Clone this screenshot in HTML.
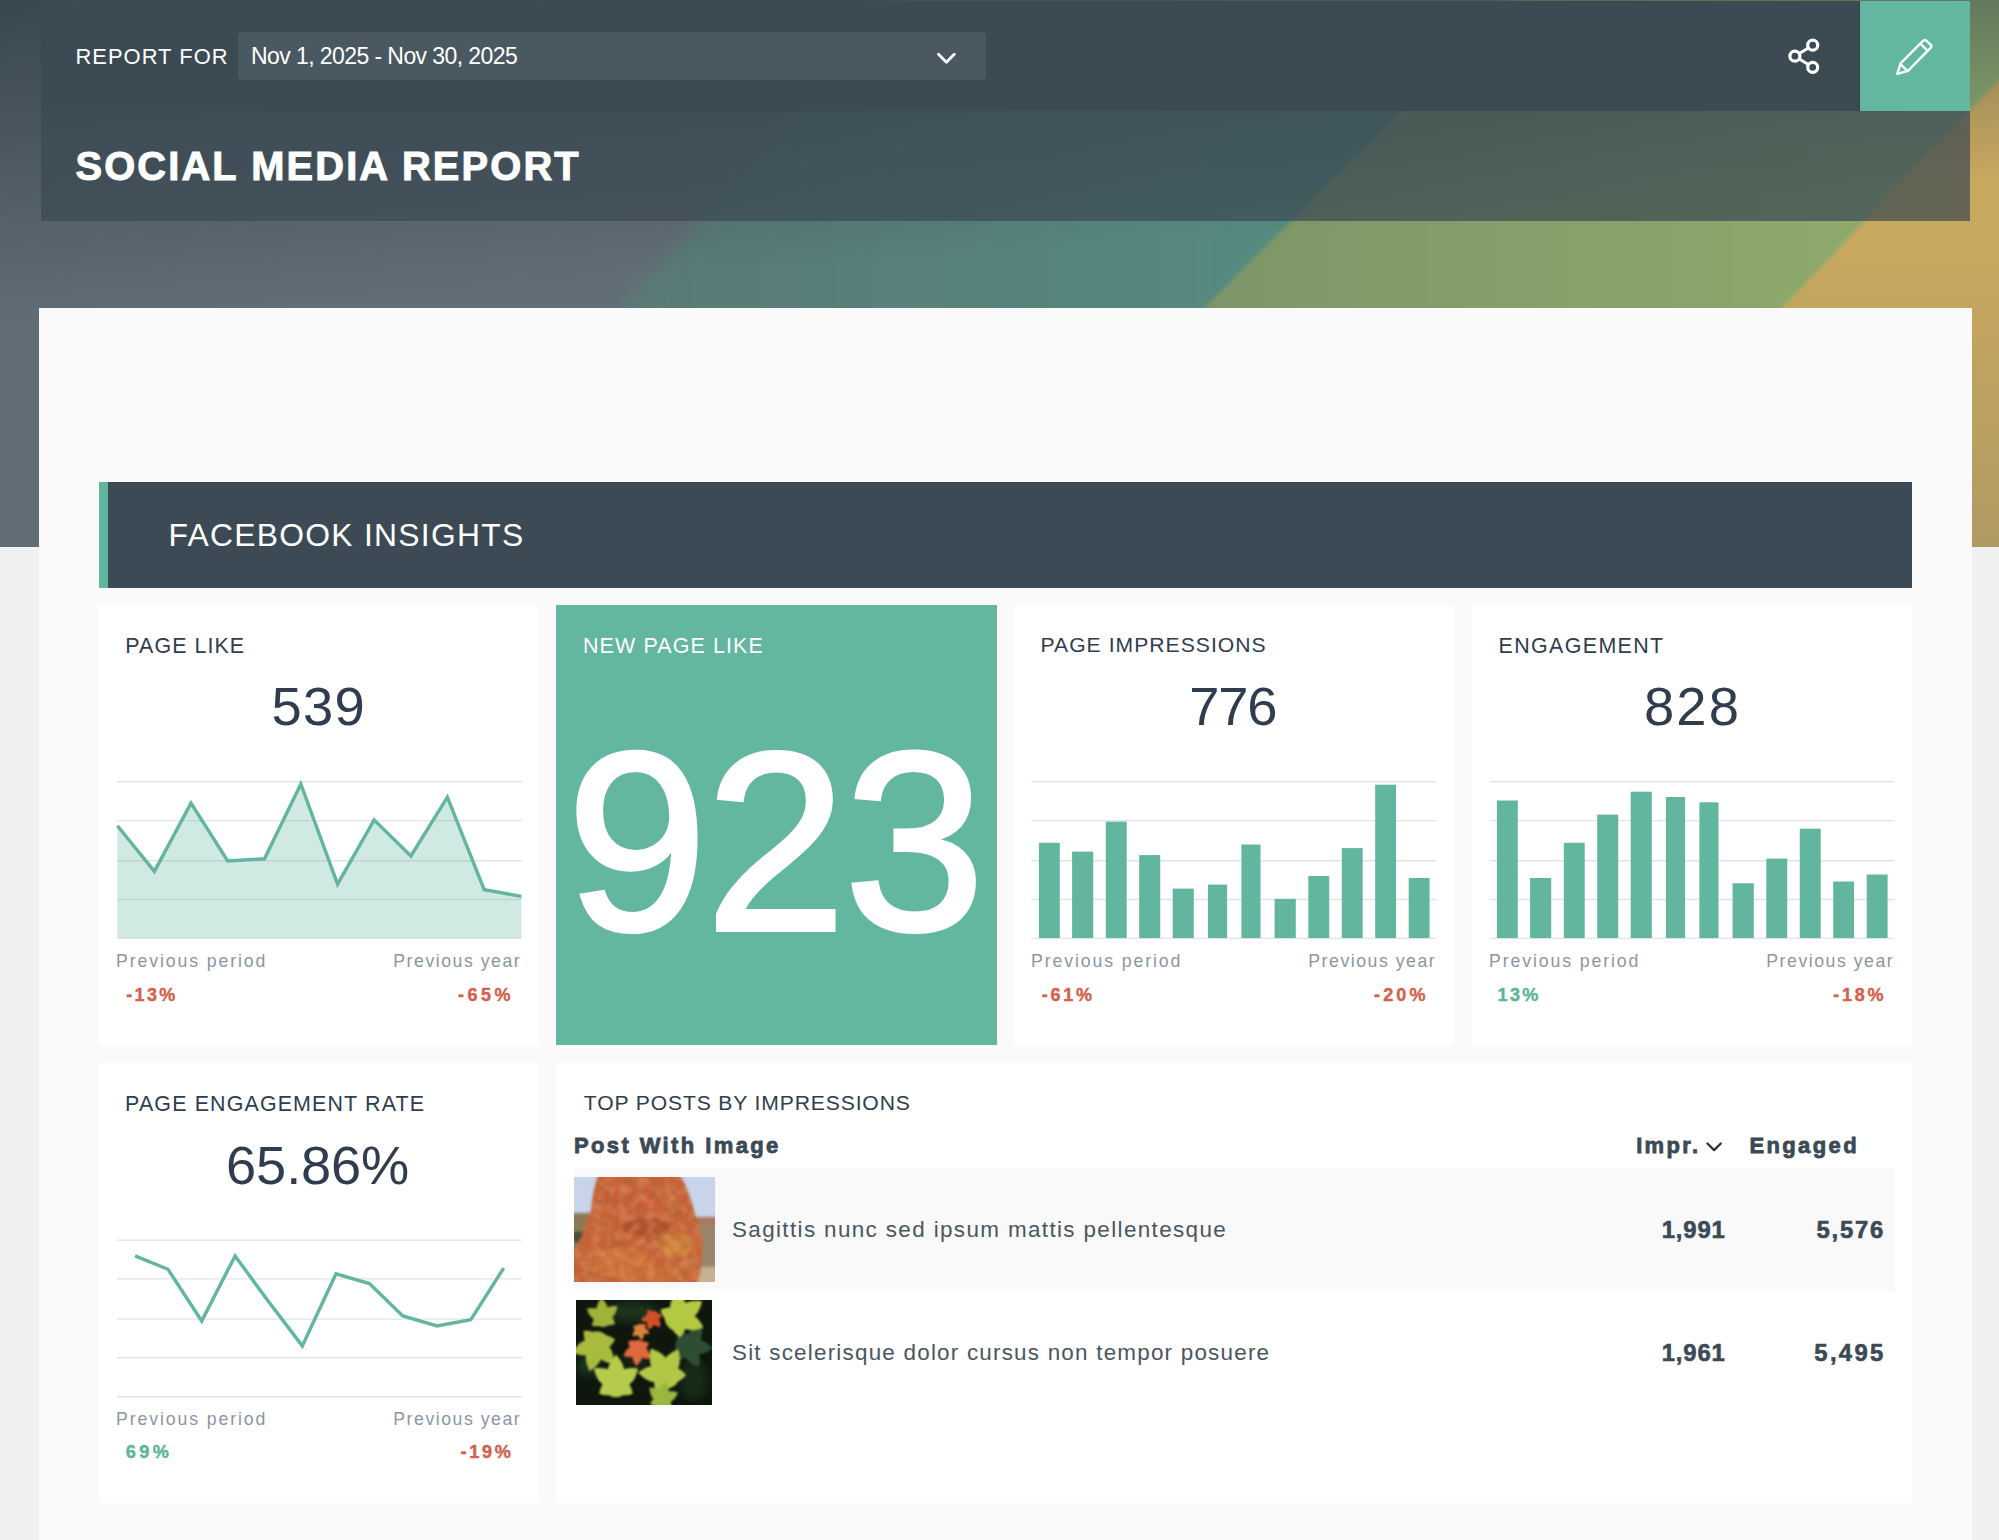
<!DOCTYPE html>
<html lang="en">
<head>
<meta charset="utf-8">
<title>Social Media Report</title>
<style>
*{box-sizing:border-box;margin:0;padding:0}
html,body{width:1999px;height:1540px;overflow:hidden}
body{background:#f0f0f0;font-family:"Liberation Sans",sans-serif;position:relative}
.abs{position:absolute}
.t{position:absolute;white-space:nowrap}
#hero{left:0;top:0;width:1999px;height:546.8px;overflow:hidden}
#hero svg{display:block}
#topbar{left:41px;top:1px;width:1929px;height:110px;background:#3c4a54}
#titlebar{left:41px;top:111px;width:1929px;height:110px;background:rgba(58,73,83,.70)}
#select{left:238px;top:32px;width:748px;height:48px;background:#4a5961;border-radius:4px}
#edit{left:1859px;top:1px;width:111px;height:110px;background:#63b7a0;border-left:1px solid #34424b}
#panel{left:38.9px;top:307.8px;width:1933px;height:1240px;background:#fafafa}
#section{left:99px;top:482px;width:1813px;height:105.5px;background:linear-gradient(90deg,#62b69f 8.6px,#3b4a54 8.6px)}
.card{position:absolute;background:#fff;width:440.2px;height:440.2px}
.card svg{position:absolute;left:0;top:0}
#c2{background:#63b6a0}
.row1{left:574px;top:1167.6px;width:1320.5px;height:123px;background:#f9f9f9}
</style>
</head>
<body>
<div id="hero" class="abs"><svg width="1999" height="547" viewBox="0 0 1999 547">
<defs>
<linearGradient id="gv" gradientUnits="userSpaceOnUse" x1="0" y1="0" x2="25.4" y2="330">
<stop offset="0" stop-color="#34424c" stop-opacity=".88"/>
<stop offset=".33" stop-color="#34424c" stop-opacity=".6"/>
<stop offset=".66" stop-color="#34424c" stop-opacity=".29"/>
<stop offset="1" stop-color="#34424c" stop-opacity="0"/>
</linearGradient>
<linearGradient id="gteal" gradientUnits="userSpaceOnUse" x1="600" y1="0" x2="1250" y2="0">
<stop offset="0" stop-color="#5b7877"/><stop offset="1" stop-color="#558a80"/>
</linearGradient>
<linearGradient id="ggreen" gradientUnits="userSpaceOnUse" x1="1200" y1="0" x2="1850" y2="0">
<stop offset="0" stop-color="#7d9668"/><stop offset="1" stop-color="#8da96c"/>
</linearGradient>
<linearGradient id="ggold" gradientUnits="userSpaceOnUse" x1="0" y1="250" x2="0" y2="546">
<stop offset="0" stop-color="#c9a85f"/><stop offset="1" stop-color="#b09a63"/>
</linearGradient>
<filter id="soft1" x="-5%" y="-5%" width="110%" height="110%"><feGaussianBlur stdDeviation="7"/></filter>
<filter id="soft2" x="-5%" y="-5%" width="110%" height="110%"><feGaussianBlur stdDeviation="2"/></filter>
</defs>
<rect width="1999" height="547" fill="#626e76"/>
<polygon filter="url(#soft1)" points="918.6,-20 1700,-20 1700,566 386.6,566" fill="url(#gteal)"/>
<g filter="url(#soft2)">
<polygon points="1532,-20 2200,-20 2200,566 946,566" fill="url(#ggreen)"/>
<polygon points="2094,-20 2300,-20 2300,566 1537.3,566" fill="url(#ggold)"/>
</g>
<rect width="1999" height="547" fill="url(#gv)"/>
</svg></div>
<div id="topbar" class="abs"></div>
<div id="titlebar" class="abs"></div>
<div id="select" class="abs"></div>
<div id="edit" class="abs"></div>
<svg class="abs" style="left:0;top:0" width="1999" height="112" viewBox="0 0 1999 112" fill="none" stroke="#fff" stroke-linecap="round" stroke-linejoin="round">
<polyline points="938.5,54.3 946.4,62.2 954.3,54.3" stroke-width="2.8"/>
<g stroke-width="3.2"><circle cx="1812.7" cy="45.2" r="5"/><circle cx="1794.9" cy="56.2" r="5"/><circle cx="1812.7" cy="67.3" r="5"/>
<path d="M1799.3 53.5 L1808.3 47.9 M1799.3 58.9 L1808.3 64.6" stroke-width="3"/></g>
<g stroke-width="2.4"><path d="M1897.3 73.9 L1900.6 63.4 L1923.2 40.6 Q1924.7 39.2 1926.2 40.6 L1930.8 44.9 Q1932.2 46.3 1930.8 47.7 L1908 70.8 Z"/><path d="M1921.2 44.5 L1926.9 50.1 M1900.6 64.4 L1907 70.5"/></g>
</svg>
<div id="panel" class="abs"></div>
<div id="section" class="abs"></div>
<div class="card" id="c1" style="left:98.6px;top:605.3px"><svg width="441" height="441" viewBox="98.6 605.3 441 441"><g stroke="#e2e3e4" stroke-width="1.4"><line x1="116.6" x2="521.4" y1="782.1" y2="782.1"/><line x1="116.6" x2="521.4" y1="820.9" y2="820.9"/><line x1="116.6" x2="521.4" y1="861.1" y2="861.1"/><line x1="116.6" x2="521.4" y1="899.8" y2="899.8"/><line x1="116.6" x2="521.4" y1="938.7" y2="938.7"/></g><polygon points="117.0,826.1 154.0,871.7 190.6,803.5 227.3,861.3 264.1,859.1 300.4,784.3 337.2,884.5 373.7,820.2 410.5,856.3 447.0,797.5 483.8,890.0 521.0,896.6 521,938.4 117,938.4" fill="#62b59e" fill-opacity=".30"/><polyline points="117.0,826.1 154.0,871.7 190.6,803.5 227.3,861.3 264.1,859.1 300.4,784.3 337.2,884.5 373.7,820.2 410.5,856.3 447.0,797.5 483.8,890.0 521.0,896.6" fill="none" stroke="#62b59e" stroke-width="3.4" stroke-linejoin="miter"/></svg></div>
<div class="card" id="c2" style="left:556.4px;top:605.3px"></div>
<div class="card" id="c3" style="left:1014px;top:605.3px"><svg width="441" height="441" viewBox="1014 605.3 441 441"><g stroke="#e2e3e4" stroke-width="1.4"><line x1="1031.6" x2="1436.4" y1="782.1" y2="782.1"/><line x1="1031.6" x2="1436.4" y1="820.9" y2="820.9"/><line x1="1031.6" x2="1436.4" y1="861.1" y2="861.1"/><line x1="1031.6" x2="1436.4" y1="899.8" y2="899.8"/><line x1="1031.6" x2="1436.4" y1="938.7" y2="938.7"/></g><g fill="#62b59e"><rect x="1038.9" y="843.1" width="20.9" height="95.2"/><rect x="1072.1" y="851.9" width="21.1" height="86.4"/><rect x="1105.8" y="821.9" width="20.9" height="116.4"/><rect x="1139.2" y="855.4" width="21.0" height="82.9"/><rect x="1172.7" y="888.9" width="21.1" height="49.4"/><rect x="1207.9" y="884.9" width="19.2" height="53.4"/><rect x="1241.4" y="844.8" width="19.1" height="93.5"/><rect x="1274.6" y="899.2" width="21.2" height="39.1"/><rect x="1308.3" y="876.3" width="20.9" height="62.0"/><rect x="1341.8" y="848.4" width="20.9" height="89.9"/><rect x="1375.2" y="785.0" width="20.9" height="153.3"/><rect x="1408.7" y="878.3" width="20.9" height="60.0"/></g></svg></div>
<div class="card" id="c4" style="left:1472px;top:605.3px"><svg width="441" height="441" viewBox="1472 605.3 441 441"><g stroke="#e2e3e4" stroke-width="1.4"><line x1="1489.6" x2="1894.4" y1="782.1" y2="782.1"/><line x1="1489.6" x2="1894.4" y1="820.9" y2="820.9"/><line x1="1489.6" x2="1894.4" y1="861.1" y2="861.1"/><line x1="1489.6" x2="1894.4" y1="899.8" y2="899.8"/><line x1="1489.6" x2="1894.4" y1="938.7" y2="938.7"/></g><g fill="#62b59e"><rect x="1496.9" y="800.8" width="20.9" height="137.5"/><rect x="1530.1" y="878.3" width="21.1" height="60.0"/><rect x="1563.8" y="843.1" width="20.9" height="95.2"/><rect x="1597.2" y="814.9" width="21.0" height="123.4"/><rect x="1630.7" y="792.0" width="21.1" height="146.3"/><rect x="1665.9" y="797.3" width="19.2" height="141.0"/><rect x="1699.4" y="802.6" width="19.1" height="135.7"/><rect x="1732.6" y="883.6" width="21.2" height="54.7"/><rect x="1766.3" y="858.9" width="20.9" height="79.4"/><rect x="1799.8" y="829.0" width="20.9" height="109.3"/><rect x="1833.2" y="881.8" width="20.9" height="56.5"/><rect x="1866.7" y="874.8" width="20.9" height="63.5"/></g></svg></div>
<div class="card" id="c5" style="left:98.6px;top:1063px"><svg width="441" height="441" viewBox="98.6 1063 441 441"><g stroke="#e2e3e4" stroke-width="1.4"><line x1="116.6" x2="521.4" y1="1240.1" y2="1240.1"/><line x1="116.6" x2="521.4" y1="1278.9" y2="1278.9"/><line x1="116.6" x2="521.4" y1="1319.1" y2="1319.1"/><line x1="116.6" x2="521.4" y1="1357.8" y2="1357.8"/><line x1="116.6" x2="521.4" y1="1396.7" y2="1396.7"/></g><polyline points="134.7,1255.9 167.6,1269.3 201.3,1321.0 234.7,1255.9 268.1,1301.6 301.9,1345.9 335.6,1273.9 369.0,1283.6 402.4,1315.9 436.7,1325.9 470.4,1319.6 503.3,1268.1" fill="none" stroke="#62b59e" stroke-width="3.4" stroke-linejoin="miter"/></svg></div>
<div class="card" id="c6" style="left:556.4px;top:1063px;width:1356px"></div>
<div class="abs row1"></div>
<svg class="abs" style="left:574px;top:1176.8px" width="141" height="105" viewBox="0 0 141 105">
<defs>
<filter id="b1" x="-10%" y="-10%" width="120%" height="120%"><feGaussianBlur stdDeviation="1.6"/></filter>
<filter id="n1" x="0" y="0" width="100%" height="100%"><feTurbulence type="fractalNoise" baseFrequency="0.13" numOctaves="2" seed="7" result="n"/><feColorMatrix in="n" type="matrix" values="0 0 0 0 0.35  0 0 0 0 0.12  0 0 0 0 0.03  1.9 0 0 0 -0.75"/><feGaussianBlur stdDeviation="0.9"/></filter>
<filter id="n1b" x="0" y="0" width="100%" height="100%"><feTurbulence type="fractalNoise" baseFrequency="0.11" numOctaves="2" seed="23" result="n"/><feColorMatrix in="n" type="matrix" values="0 0 0 0 0.88  0 0 0 0 0.52  0 0 0 0 0.22  0 1.9 0 0 -0.75"/><feGaussianBlur stdDeviation="0.9"/></filter>
<clipPath id="cp1"><rect width="141" height="105"/></clipPath>
<clipPath id="tree1"><path d="M25 -4 L105 -4 Q116 16 121 38 Q131 58 128 80 Q126 100 122 112 L-6 112 L-6 84 Q2 70 9 58 Q10 46 17 34 Q19 12 25 -4Z"/></clipPath>
</defs>
<g clip-path="url(#cp1)"><rect width="141" height="105" fill="#c7d4ea"/>
<g filter="url(#b1)">
<rect x="-5" y="36" width="32" height="76" fill="#8c7a56"/>
<ellipse cx="4" cy="60" rx="7" ry="6" fill="#46503a"/>
<rect x="-5" y="72" width="16" height="40" fill="#a8744a"/>
<rect x="116" y="40" width="32" height="70" fill="#98866a"/>
<rect x="120" y="40" width="25" height="8" fill="#a87860"/>
<rect x="124" y="90" width="25" height="20" fill="#c6b28e"/>
<path d="M25 -4 L105 -4 Q116 16 121 38 Q131 58 128 80 Q126 100 122 112 L-6 112 L-6 84 Q2 70 9 58 Q10 46 17 34 Q19 12 25 -4Z" fill="#c9643a"/>
<ellipse cx="72" cy="50" rx="24" ry="9" fill="#a8482a" opacity=".75"/>
<ellipse cx="60" cy="22" rx="30" ry="14" fill="#cc5e3d" opacity=".8"/>
<ellipse cx="48" cy="86" rx="34" ry="15" fill="#d4763c" opacity=".8"/>
<ellipse cx="102" cy="68" rx="17" ry="13" fill="#d98a40" opacity=".7"/>
<ellipse cx="92" cy="96" rx="32" ry="9" fill="#d06f38" opacity=".8"/>
</g>
<g clip-path="url(#tree1)"><rect width="141" height="105" filter="url(#n1)" opacity=".65"/><rect width="141" height="105" filter="url(#n1b)" opacity=".4"/></g>
</g></svg>
<svg class="abs" style="left:576.4px;top:1300px" width="136" height="105" viewBox="0 0 136 105">
<defs><filter id="b2" x="-10%" y="-10%" width="120%" height="120%"><feGaussianBlur stdDeviation="1.1"/></filter>
<filter id="b3" x="-10%" y="-10%" width="120%" height="120%"><feGaussianBlur stdDeviation="4"/></filter>
<clipPath id="cp2"><rect width="136" height="105"/></clipPath></defs>
<g clip-path="url(#cp2)"><rect width="136" height="105" fill="#0e160e"/>
<g filter="url(#b3)">
<ellipse cx="55" cy="12" rx="28" ry="10" fill="#1d331f"/>
<ellipse cx="12" cy="66" rx="12" ry="10" fill="#1f3320"/>
<ellipse cx="118" cy="80" rx="14" ry="20" fill="#182a19"/>
<ellipse cx="60" cy="60" rx="14" ry="10" fill="#1a2412"/>
</g>
<g filter="url(#b2)"><g transform="translate(111,46) rotate(95)" fill="#2d4d32"><path transform="rotate(0)" d="M0 2.6 C-10.4 -5.2 -9.4 -15.6 0 -26.0 C9.4 -15.6 10.4 -5.2 0 2.6Z"/><path transform="rotate(55)" d="M0 2.4 C-9.9 -4.8 -8.9 -14.4 0 -23.9 C8.9 -14.4 9.9 -4.8 0 2.4Z"/><path transform="rotate(-55)" d="M0 2.4 C-9.9 -4.8 -8.9 -14.4 0 -23.9 C8.9 -14.4 9.9 -4.8 0 2.4Z"/><path transform="rotate(120)" d="M0 1.7 C-8.8 -3.4 -8.0 -10.3 0 -17.2 C8.0 -10.3 8.8 -3.4 0 1.7Z"/><path transform="rotate(-120)" d="M0 1.7 C-8.8 -3.4 -8.0 -10.3 0 -17.2 C8.0 -10.3 8.8 -3.4 0 1.7Z"/><circle r="11.7"/></g><g transform="translate(27,18) rotate(-5)" fill="#9fb23a"><path transform="rotate(0)" d="M0 2.0 C-8.1 -4.1 -7.3 -12.2 0 -20.3 C7.3 -12.2 8.1 -4.1 0 2.0Z"/><path transform="rotate(55)" d="M0 1.9 C-7.7 -3.7 -6.9 -11.2 0 -18.7 C6.9 -11.2 7.7 -3.7 0 1.9Z"/><path transform="rotate(-55)" d="M0 1.9 C-7.7 -3.7 -6.9 -11.2 0 -18.7 C6.9 -11.2 7.7 -3.7 0 1.9Z"/><path transform="rotate(120)" d="M0 1.3 C-6.9 -2.7 -6.2 -8.0 0 -13.4 C6.2 -8.0 6.9 -2.7 0 1.3Z"/><path transform="rotate(-120)" d="M0 1.3 C-6.9 -2.7 -6.2 -8.0 0 -13.4 C6.2 -8.0 6.9 -2.7 0 1.3Z"/><circle r="9.1"/></g><g transform="translate(21,44) rotate(-165)" fill="#a8bb3e"><path transform="rotate(0)" d="M0 2.8 C-11.3 -5.6 -10.2 -16.9 0 -28.2 C10.2 -16.9 11.3 -5.6 0 2.8Z"/><path transform="rotate(55)" d="M0 2.6 C-10.7 -5.2 -9.6 -15.6 0 -25.9 C9.6 -15.6 10.7 -5.2 0 2.6Z"/><path transform="rotate(-55)" d="M0 2.6 C-10.7 -5.2 -9.6 -15.6 0 -25.9 C9.6 -15.6 10.7 -5.2 0 2.6Z"/><path transform="rotate(120)" d="M0 1.9 C-9.6 -3.7 -8.6 -11.2 0 -18.6 C8.6 -11.2 9.6 -3.7 0 1.9Z"/><path transform="rotate(-120)" d="M0 1.9 C-9.6 -3.7 -8.6 -11.2 0 -18.6 C8.6 -11.2 9.6 -3.7 0 1.9Z"/><circle r="12.7"/></g><g transform="translate(102,18) rotate(55)" fill="#b5c843"><path transform="rotate(0)" d="M0 2.9 C-11.8 -5.9 -10.6 -17.6 0 -29.4 C10.6 -17.6 11.8 -5.9 0 2.9Z"/><path transform="rotate(55)" d="M0 2.7 C-11.2 -5.4 -10.1 -16.2 0 -27.0 C10.1 -16.2 11.2 -5.4 0 2.7Z"/><path transform="rotate(-55)" d="M0 2.7 C-11.2 -5.4 -10.1 -16.2 0 -27.0 C10.1 -16.2 11.2 -5.4 0 2.7Z"/><path transform="rotate(120)" d="M0 1.9 C-10.0 -3.9 -9.0 -11.6 0 -19.4 C9.0 -11.6 10.0 -3.9 0 1.9Z"/><path transform="rotate(-120)" d="M0 1.9 C-10.0 -3.9 -9.0 -11.6 0 -19.4 C9.0 -11.6 10.0 -3.9 0 1.9Z"/><circle r="13.2"/></g><g transform="translate(40,84) rotate(0)" fill="#b6ca4b"><path transform="rotate(0)" d="M0 2.9 C-11.8 -5.9 -10.6 -17.6 0 -29.4 C10.6 -17.6 11.8 -5.9 0 2.9Z"/><path transform="rotate(55)" d="M0 2.7 C-11.2 -5.4 -10.1 -16.2 0 -27.0 C10.1 -16.2 11.2 -5.4 0 2.7Z"/><path transform="rotate(-55)" d="M0 2.7 C-11.2 -5.4 -10.1 -16.2 0 -27.0 C10.1 -16.2 11.2 -5.4 0 2.7Z"/><path transform="rotate(120)" d="M0 1.9 C-10.0 -3.9 -9.0 -11.6 0 -19.4 C9.0 -11.6 10.0 -3.9 0 1.9Z"/><path transform="rotate(-120)" d="M0 1.9 C-10.0 -3.9 -9.0 -11.6 0 -19.4 C9.0 -11.6 10.0 -3.9 0 1.9Z"/><circle r="13.2"/></g><g transform="translate(90,75) rotate(-30)" fill="#b1c846"><path transform="rotate(0)" d="M0 3.1 C-12.2 -6.1 -11.0 -18.3 0 -30.5 C11.0 -18.3 12.2 -6.1 0 3.1Z"/><path transform="rotate(55)" d="M0 2.8 C-11.6 -5.6 -10.4 -16.8 0 -28.1 C10.4 -16.8 11.6 -5.6 0 2.8Z"/><path transform="rotate(-55)" d="M0 2.8 C-11.6 -5.6 -10.4 -16.8 0 -28.1 C10.4 -16.8 11.6 -5.6 0 2.8Z"/><path transform="rotate(120)" d="M0 2.0 C-10.4 -4.0 -9.3 -12.1 0 -20.1 C9.3 -12.1 10.4 -4.0 0 2.0Z"/><path transform="rotate(-120)" d="M0 2.0 C-10.4 -4.0 -9.3 -12.1 0 -20.1 C9.3 -12.1 10.4 -4.0 0 2.0Z"/><circle r="13.7"/></g><g transform="translate(86,100) rotate(10)" fill="#9ab83e"><path transform="rotate(0)" d="M0 1.9 C-7.7 -3.8 -6.9 -11.5 0 -19.2 C6.9 -11.5 7.7 -3.8 0 1.9Z"/><path transform="rotate(55)" d="M0 1.8 C-7.3 -3.5 -6.6 -10.6 0 -17.7 C6.6 -10.6 7.3 -3.5 0 1.8Z"/><path transform="rotate(-55)" d="M0 1.8 C-7.3 -3.5 -6.6 -10.6 0 -17.7 C6.6 -10.6 7.3 -3.5 0 1.8Z"/><path transform="rotate(120)" d="M0 1.3 C-6.5 -2.5 -5.9 -7.6 0 -12.7 C5.9 -7.6 6.5 -2.5 0 1.3Z"/><path transform="rotate(-120)" d="M0 1.3 C-6.5 -2.5 -5.9 -7.6 0 -12.7 C5.9 -7.6 6.5 -2.5 0 1.3Z"/><circle r="8.6"/></g><g transform="translate(62,48) rotate(185)" fill="#e0683f"><path transform="rotate(0)" d="M0 1.8 C-7.2 -3.6 -6.5 -10.9 0 -18.1 C6.5 -10.9 7.2 -3.6 0 1.8Z"/><path transform="rotate(55)" d="M0 1.7 C-6.9 -3.3 -6.2 -10.0 0 -16.7 C6.2 -10.0 6.9 -3.3 0 1.7Z"/><path transform="rotate(-55)" d="M0 1.7 C-6.9 -3.3 -6.2 -10.0 0 -16.7 C6.2 -10.0 6.9 -3.3 0 1.7Z"/><path transform="rotate(120)" d="M0 1.2 C-6.2 -2.4 -5.5 -7.2 0 -11.9 C5.5 -7.2 6.2 -2.4 0 1.2Z"/><path transform="rotate(-120)" d="M0 1.2 C-6.2 -2.4 -5.5 -7.2 0 -11.9 C5.5 -7.2 6.2 -2.4 0 1.2Z"/><circle r="8.1"/></g><g transform="translate(77,17) rotate(200)" fill="#d04f28"><path transform="rotate(0)" d="M0 1.4 C-5.4 -2.7 -4.9 -8.2 0 -13.6 C4.9 -8.2 5.4 -2.7 0 1.4Z"/><path transform="rotate(55)" d="M0 1.3 C-5.2 -2.5 -4.7 -7.5 0 -12.5 C4.7 -7.5 5.2 -2.5 0 1.3Z"/><path transform="rotate(-55)" d="M0 1.3 C-5.2 -2.5 -4.7 -7.5 0 -12.5 C4.7 -7.5 5.2 -2.5 0 1.3Z"/><path transform="rotate(120)" d="M0 0.9 C-4.6 -1.8 -4.2 -5.4 0 -9.0 C4.2 -5.4 4.6 -1.8 0 0.9Z"/><path transform="rotate(-120)" d="M0 0.9 C-4.6 -1.8 -4.2 -5.4 0 -9.0 C4.2 -5.4 4.6 -1.8 0 0.9Z"/><circle r="6.1"/></g><g transform="translate(64,29) rotate(170)" fill="#d9803a"><path transform="rotate(0)" d="M0 1.1 C-4.5 -2.3 -4.1 -6.8 0 -11.3 C4.1 -6.8 4.5 -2.3 0 1.1Z"/><path transform="rotate(55)" d="M0 1.0 C-4.3 -2.1 -3.9 -6.2 0 -10.4 C3.9 -6.2 4.3 -2.1 0 1.0Z"/><path transform="rotate(-55)" d="M0 1.0 C-4.3 -2.1 -3.9 -6.2 0 -10.4 C3.9 -6.2 4.3 -2.1 0 1.0Z"/><path transform="rotate(120)" d="M0 0.7 C-3.8 -1.5 -3.5 -4.5 0 -7.5 C3.5 -4.5 3.8 -1.5 0 0.7Z"/><path transform="rotate(-120)" d="M0 0.7 C-3.8 -1.5 -3.5 -4.5 0 -7.5 C3.5 -4.5 3.8 -1.5 0 0.7Z"/><circle r="5.1"/></g></g></g></svg>
<svg class="abs" style="left:1700px;top:1136px" width="30" height="20" viewBox="1700 1136 30 20" fill="none" stroke="#2b2f33" stroke-width="2.2" stroke-linecap="round" stroke-linejoin="round"><polyline points="1707.4,1143.5 1714.1,1150.1 1720.8,1143.5"/></svg>
<div class="t" id="t1" style="left:75.50px;top:43.25px;font-size:21.93px;line-height:27px;letter-spacing:1.012px;color:#fff;">REPORT FOR</div>
<div class="t" id="t2" style="left:251.00px;top:42.00px;font-size:23.02px;line-height:28px;letter-spacing:-0.587px;color:#fff;">Nov 1, 2025 - Nov 30, 2025</div>
<div class="t" id="t3" style="left:75.50px;top:142.40px;font-size:39.86px;line-height:48px;letter-spacing:2.115px;color:#fff;font-weight:700;-webkit-text-stroke:1.0px #fff;">SOCIAL MEDIA REPORT</div>
<div class="t" id="t4" style="left:168.50px;top:516.10px;font-size:31.83px;line-height:39px;letter-spacing:1.279px;color:#fff;">FACEBOOK INSIGHTS</div>
<div class="t" id="t5" style="left:125.30px;top:632.50px;font-size:21.43px;line-height:26px;letter-spacing:1.066px;color:#2f3d4e;">PAGE LIKE</div>
<div class="t" id="t6" style="left:271.50px;top:674.16px;font-size:54.37px;line-height:66px;letter-spacing:1.268px;color:#2f3d4e;">539</div>
<div class="t" id="t7" style="left:583.00px;top:632.50px;font-size:21.43px;line-height:26px;letter-spacing:1.120px;color:#fff;">NEW PAGE LIKE</div>
<div class="t" id="t8" style="left:566.40px;top:690.46px;font-size:253.52px;line-height:305px;letter-spacing:-2.193px;color:#fff;-webkit-text-stroke:4px #fff;">923</div>
<div class="t" id="t9" style="left:1040.50px;top:632.00px;font-size:21.13px;line-height:26px;letter-spacing:1.027px;color:#2f3d4e;">PAGE IMPRESSIONS</div>
<div class="t" id="t10" style="left:1189.20px;top:674.16px;font-size:54.37px;line-height:66px;letter-spacing:-1.182px;color:#2f3d4e;">776</div>
<div class="t" id="t11" style="left:1498.50px;top:632.50px;font-size:21.43px;line-height:26px;letter-spacing:1.371px;color:#2f3d4e;">ENGAGEMENT</div>
<div class="t" id="t12" style="left:1643.90px;top:674.16px;font-size:54.37px;line-height:66px;letter-spacing:2.218px;color:#2f3d4e;">828</div>
<div class="t" id="t13" style="left:125.10px;top:1090.50px;font-size:21.43px;line-height:26px;letter-spacing:1.134px;color:#2f3d4e;">PAGE ENGAGEMENT RATE</div>
<div class="t" id="t14" style="left:226.10px;top:1131.86px;font-size:54.23px;line-height:66px;letter-spacing:-0.136px;color:#2f3d4e;">65.86%</div>
<div class="t" id="t15" style="left:583.80px;top:1090.00px;font-size:21.13px;line-height:26px;letter-spacing:0.854px;color:#2f3d4e;">TOP POSTS BY IMPRESSIONS</div>
<div class="t" id="pp0" style="left:116.00px;top:950.00px;font-size:17.70px;line-height:22px;letter-spacing:1.896px;color:#8c96a2;">Previous period</div>
<div class="t" id="py0" style="left:393.30px;top:950.00px;font-size:17.70px;line-height:22px;letter-spacing:1.521px;color:#8c96a2;">Previous year</div>
<div class="t" id="pp1" style="left:1031.00px;top:950.00px;font-size:17.70px;line-height:22px;letter-spacing:1.896px;color:#8c96a2;">Previous period</div>
<div class="t" id="py1" style="left:1308.30px;top:950.00px;font-size:17.70px;line-height:22px;letter-spacing:1.521px;color:#8c96a2;">Previous year</div>
<div class="t" id="pp2" style="left:1489.00px;top:950.00px;font-size:17.70px;line-height:22px;letter-spacing:1.896px;color:#8c96a2;">Previous period</div>
<div class="t" id="py2" style="left:1766.30px;top:950.00px;font-size:17.70px;line-height:22px;letter-spacing:1.521px;color:#8c96a2;">Previous year</div>
<div class="t" id="pp3" style="left:116.00px;top:1407.80px;font-size:17.70px;line-height:22px;letter-spacing:1.896px;color:#8c96a2;">Previous period</div>
<div class="t" id="py3" style="left:393.30px;top:1407.80px;font-size:17.70px;line-height:22px;letter-spacing:1.521px;color:#8c96a2;">Previous year</div>
<div class="t" id="v1a" style="left:126.20px;top:983.80px;font-size:18.00px;line-height:22px;letter-spacing:2.361px;color:#d4614e;font-weight:700;-webkit-text-stroke:0.4px #d4614e;">-13%</div>
<div class="t" id="v1b" style="left:458.00px;top:983.80px;font-size:18.00px;line-height:22px;letter-spacing:3.461px;color:#d4614e;font-weight:700;-webkit-text-stroke:0.4px #d4614e;">-65%</div>
<div class="t" id="v3a" style="left:1041.70px;top:983.80px;font-size:18.00px;line-height:22px;letter-spacing:2.728px;color:#d4614e;font-weight:700;-webkit-text-stroke:0.4px #d4614e;">-61%</div>
<div class="t" id="v3b" style="left:1374.10px;top:983.80px;font-size:18.00px;line-height:22px;letter-spacing:3.095px;color:#d4614e;font-weight:700;-webkit-text-stroke:0.4px #d4614e;">-20%</div>
<div class="t" id="v4a" style="left:1497.60px;top:983.80px;font-size:18.00px;line-height:22px;letter-spacing:2.339px;color:#5cb598;font-weight:700;-webkit-text-stroke:0.4px #5cb598;">13%</div>
<div class="t" id="v4b" style="left:1833.20px;top:983.80px;font-size:18.00px;line-height:22px;letter-spacing:2.728px;color:#d4614e;font-weight:700;-webkit-text-stroke:0.4px #d4614e;">-18%</div>
<div class="t" id="v5a" style="left:125.80px;top:1441.10px;font-size:18.14px;line-height:22px;letter-spacing:3.420px;color:#5cb598;font-weight:700;-webkit-text-stroke:0.4px #5cb598;">69%</div>
<div class="t" id="v5b" style="left:460.60px;top:1441.10px;font-size:18.14px;line-height:22px;letter-spacing:2.668px;color:#d4614e;font-weight:700;-webkit-text-stroke:0.4px #d4614e;">-19%</div>
<div class="t" id="h1" style="left:573.90px;top:1131.80px;font-size:22.01px;line-height:27px;letter-spacing:2.393px;color:#3b4a55;font-weight:700;-webkit-text-stroke:0.8px #3b4a55;">Post With Image</div>
<div class="t" id="h2" style="left:1636.20px;top:1131.80px;font-size:22.01px;line-height:27px;letter-spacing:2.310px;color:#3b4a55;font-weight:700;-webkit-text-stroke:0.8px #3b4a55;">Impr.</div>
<div class="t" id="h3" style="left:1749.40px;top:1131.80px;font-size:22.01px;line-height:27px;letter-spacing:2.390px;color:#3b4a55;font-weight:700;-webkit-text-stroke:0.8px #3b4a55;">Engaged</div>
<div class="t" id="r1" style="left:732.00px;top:1216.00px;font-size:22.45px;line-height:27px;letter-spacing:1.363px;color:#4a5661;">Sagittis nunc sed ipsum mattis pellentesque</div>
<div class="t" id="r2" style="left:732.00px;top:1339.30px;font-size:22.45px;line-height:27px;letter-spacing:1.210px;color:#4a5661;">Sit scelerisque dolor cursus non tempor posuere</div>
<div class="t" id="n1" style="left:1661.70px;top:1214.60px;font-size:23.86px;line-height:29px;letter-spacing:0.848px;color:#3b4a55;font-weight:700;-webkit-text-stroke:0.6px #3b4a55;">1,991</div>
<div class="t" id="n2" style="left:1816.40px;top:1214.60px;font-size:23.86px;line-height:29px;letter-spacing:1.798px;color:#3b4a55;font-weight:700;-webkit-text-stroke:0.6px #3b4a55;">5,576</div>
<div class="t" id="n3" style="left:1661.70px;top:1338.20px;font-size:23.86px;line-height:29px;letter-spacing:0.848px;color:#3b4a55;font-weight:700;-webkit-text-stroke:0.6px #3b4a55;">1,961</div>
<div class="t" id="n4" style="left:1814.30px;top:1338.20px;font-size:23.86px;line-height:29px;letter-spacing:2.323px;color:#3b4a55;font-weight:700;-webkit-text-stroke:0.6px #3b4a55;">5,495</div>

</body>
</html>
